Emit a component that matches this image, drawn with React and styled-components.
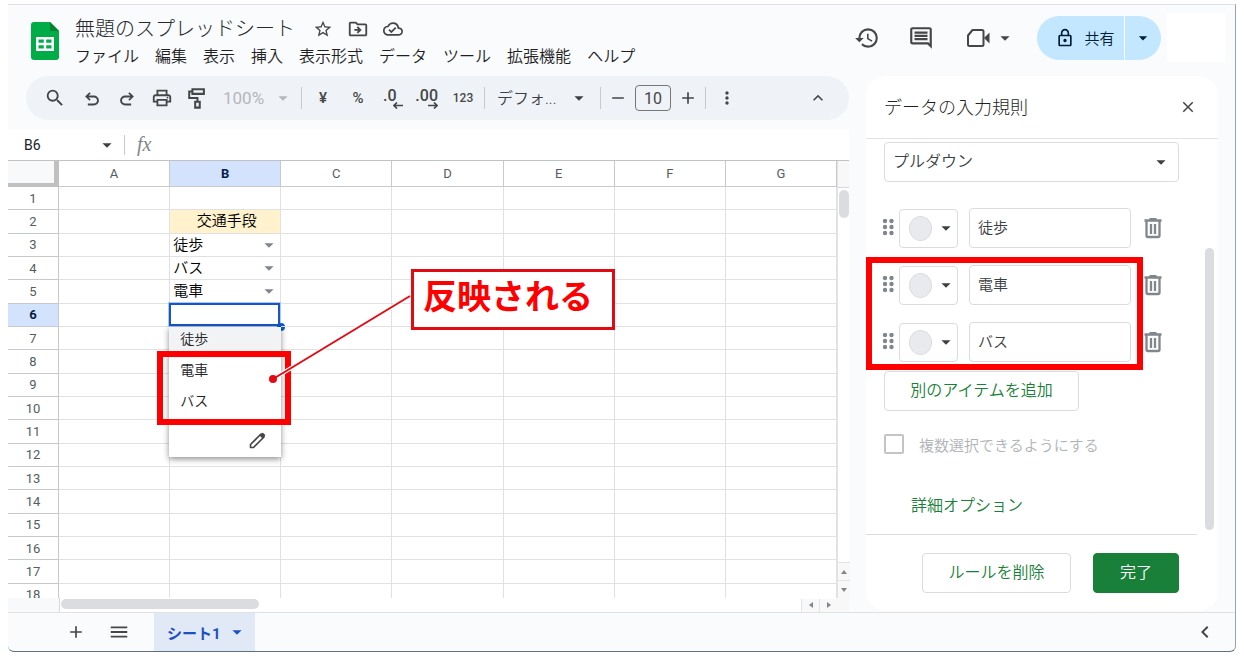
import { useState } from "react";
import styled, { createGlobalStyle } from "styled-components";
import {
  MdAdd,
  MdArrowDropDown,
  MdChevronLeft,
  MdClose,
  MdHistory,
  MdKeyboardArrowUp,
  MdMenu,
  MdMoreVert,
  MdOutlineCloudDone,
  MdOutlineComment,
  MdOutlineDriveFileMove,
  MdOutlineLock,
  MdOutlinePrint,
  MdRemove,
  MdSearch,
  MdStarBorder,
} from "react-icons/md";

const MENUS = ["ファイル", "編集", "表示", "挿入", "表示形式", "データ", "ツール", "拡張機能", "ヘルプ"];
const COLUMNS = ["A", "B", "C", "D", "E", "F", "G"];
const ROWS = Array.from({ length: 18 }, (_, i) => i + 1);
const CELLS = { 3: "徒歩", 4: "バス", 5: "電車" };
const OPTIONS = ["徒歩", "電車", "バス"];

const GlobalStyle = createGlobalStyle`
  * {
    box-sizing: border-box;
  }
  body {
    margin: 0;
    background: #fff;
    color: #3c4043;
    font-family: Roboto, "Noto Sans CJK JP", sans-serif;
  }
  button, input, select {
    margin: 0;
    padding: 0;
    border: 0;
    background: none;
    color: inherit;
    font: inherit;
  }
  svg {
    display: block;
    flex: none;
  }
`;

const Window = styled.div`
  display: flex;
  flex-direction: column;
  height: calc(100vh - 10px);
  min-height: 600px;
  margin: 4px 8px 6px;
  overflow: hidden;
  background: #f9fbfd;
  border-top: 1px solid #dfe1e4;
  border-right: 1px solid #98a3ae;
  border-bottom: 1px solid #5f7080;
  border-radius: 0 0 6px 6px;
`;

/* HEADER */
const Header = styled.header`
  display: flex;
  align-items: flex-start;
  height: 71px;
  flex: none;
  padding: 8px 10px 0 23px;
`;
const Logo = styled.svg`
  margin-top: 9px;
`;
const TitleBlock = styled.div`
  flex: 1;
  margin: 3px 0 0 16px;
`;
const TitleRow = styled.div`
  display: flex;
  align-items: center;
  height: 26px;
`;
const Title = styled.h1`
  margin: 0 10px 0 0;
  font-size: 20px;
  font-weight: 300;
  line-height: 26px;
  color: #26282b;
`;
const TitleButton = styled.button`
  display: grid;
  place-items: center;
  width: 35px;
  height: 26px;
  color: #444746;
`;
const MenuBar = styled.nav`
  display: flex;
  gap: 16px;
`;
const MenuButton = styled.button`
  height: 26px;
  font-size: 16px;
  font-weight: 350;
  white-space: nowrap;
  color: #1f1f1f;
`;
const Actions = styled.div`
  display: flex;
  align-items: center;
  height: 49px;
`;
const ActionButton = styled.button`
  display: flex;
  align-items: center;
  justify-content: center;
  gap: 4px;
  width: ${(props) => props.$width || 40}px;
  height: 40px;
  margin-right: ${(props) => (props.$width ? 10 : 14)}px;
  color: #444746;
`;
const Share = styled.div`
  display: flex;
  height: 44px;
  margin-right: 6px;
  overflow: hidden;
  border-radius: 22px;
  background: #c2e7ff;
  color: #001d35;
`;
const ShareButton = styled.button`
  display: flex;
  align-items: center;
  justify-content: center;
  gap: 9px;
  width: 87px;
  padding-left: 9px;
  font-size: 15px;
  font-weight: 350;
`;
const ShareMore = styled.button`
  display: grid;
  place-items: center;
  width: 37px;
  border-left: 1px solid #fff;
`;
const Account = styled.div`
  width: 58px;
  height: 49px;
  background: #fff;
`;

/* MAIN */
const Main = styled.main`
  display: grid;
  grid-template-columns: minmax(0, 1fr) 352px;
  gap: 17px;
  flex: 1;
  min-height: 0;
  padding-right: 17px;
`;
const Sheet = styled.section`
  display: flex;
  flex-direction: column;
  min-height: 0;
`;
const Toolbar = styled.div`
  display: flex;
  align-items: center;
  gap: 1px;
  height: 44px;
  flex: none;
  margin: 0 0 9px 18px;
  padding: 0 14px 0 10px;
  border-radius: 22px;
  background: #eff3f8;
  color: #444746;
`;
const ToolButton = styled.button`
  display: grid;
  place-items: center;
  flex: none;
  width: ${(props) => props.$width || 34}px;
  height: 32px;
  font-size: ${(props) => props.$size || 16}px;
  font-weight: 500;
`;
const Separator = styled.span`
  width: 1px;
  height: 22px;
  margin: 0 3px;
  flex: none;
  background: #c7cacf;
`;
const Spacer = styled.span`
  flex: 1;
`;
const Picker = styled.label`
  display: grid;
  grid-template-columns: minmax(0, 1fr);
  align-items: center;
  flex: none;
  width: ${(props) => props.$width};
  color: ${(props) => props.$color || "#3c4043"};
  > * {
    grid-area: 1 / 1;
  }
  > svg {
    justify-self: end;
    margin-right: ${(props) => props.$arrowGap || 3}px;
    pointer-events: none;
  }
`;
const PickerSelect = styled.select`
  width: 100%;
  height: ${(props) => (props.$boxed ? 40 : 32)}px;
  padding: ${(props) => (props.$boxed ? "0 8px 2px" : "0 8px")};
  appearance: none;
  opacity: 1;
  font-size: ${(props) => props.$size || 16}px;
  font-weight: ${(props) => (props.$size ? 400 : 350)};
  border: ${(props) => (props.$boxed ? "1px solid #dadce0" : "0")};
  border-radius: 4px;
`;
const Decimal = styled.span`
  display: flex;
  flex-direction: column;
  align-items: ${(props) => (props.$left ? "flex-start" : "flex-end")};
  width: 20px;
  font-size: 16px;
  line-height: 16px;
  svg {
    align-self: flex-end;
    margin-top: -2px;
  }
`;
const SizeInput = styled.input`
  width: 36px;
  height: 26px;
  margin: 0 3px;
  border: 1px solid #747775;
  border-radius: 4px;
  text-align: center;
  font-size: 16px;
`;
const FormulaBar = styled.div`
  display: flex;
  align-items: center;
  height: 31px;
  flex: none;
  background: #fff;
`;
const NameInput = styled.input`
  width: 87px;
  padding-left: 16px;
  font-size: 14px;
  color: #202124;
`;
const NameMore = styled.button`
  display: grid;
  place-items: center;
  width: 24px;
  margin-right: 5px;
`;
const FormulaLabel = styled.label`
  display: flex;
  flex: 1;
  align-items: center;
  gap: 12px;
  height: 20px;
  padding-left: 12px;
  border-left: 1px solid #c7cacf;
  color: #80868b;
  font: italic 20px "Liberation Serif", serif;
  input {
    flex: 1;
  }
`;

/* GRID */
const GridArea = styled.div`
  display: grid;
  grid-template-columns: minmax(0, 1fr) 12px;
  grid-template-rows: minmax(0, 1fr) 14px;
  flex: 1;
  min-height: 0;
  position: relative;
  border-top: 1px solid #c0c3c6;
  background: #fff;
`;
const GridView = styled.div`
  overflow: hidden;
`;
const Table = styled.table`
  width: 100%;
  height: 446px;
  table-layout: fixed;
  border-collapse: separate;
  border-spacing: 0;
`;
const Corner = styled.th`
  width: 51px;
  height: 26px;
  padding: 0;
  background: #f8f9fa;
  border-right: 5px solid #c0c0c0;
  border-bottom: 4px solid #c0c0c0;
`;
const ColumnHead = styled.th`
  height: 26px;
  padding: 0;
  border-right: 1px solid #c7c9cb;
  border-bottom: 1px solid #c7c9cb;
  background: ${(props) => (props.$active ? "#d3e3fd" : "#fff")};
  color: ${(props) => (props.$active ? "#041e49" : "#575b5f")};
  font-size: 13px;
  font-weight: ${(props) => (props.$active ? 700 : 400)};
`;
const RowHead = styled.th`
  height: 23px;
  padding: 0;
  border-right: 1px solid #c7c9cb;
  border-bottom: 1px solid #c7c9cb;
  background: ${(props) => (props.$active ? "#d3e3fd" : "#fff")};
  color: ${(props) => (props.$active ? "#041e49" : "#575b5f")};
  font-size: 13px;
  font-weight: ${(props) => (props.$active ? 700 : 400)};
  line-height: 15px;
`;
const Cell = styled.td`
  position: relative;
  height: 23px;
  padding: 0 0 0 3px;
  border-right: 1px solid #e1e1e1;
  border-bottom: 1px solid #e1e1e1;
  background: ${(props) => (props.$title ? "#fff2cc" : "transparent")};
  color: #000;
  font-size: 15px;
  font-weight: 350;
  line-height: 22px;
  text-align: ${(props) => (props.$title ? "center" : "left")};
`;
const Choice = styled.button`
  display: flex;
  align-items: center;
  justify-content: space-between;
  width: 100%;
  height: 22px;
  svg {
    color: #80868b;
  }
`;
const Selection = styled.div`
  position: absolute;
  inset: -1px 0 0 -1px;
  border: 2px solid #1a56c0;
  box-shadow: 0 0 0 1px #a8c7fa;
  &::after {
    content: "";
    position: absolute;
    right: -7px;
    bottom: -7px;
    width: 8px;
    height: 8px;
    border-radius: 50%;
    background: #0b57d0;
  }
`;
const Popup = styled.div`
  position: absolute;
  z-index: 1;
  top: 23px;
  left: -1px;
  right: -1px;
  background: #fff;
  box-shadow: 0 2px 6px rgba(0, 0, 0, 0.45);
`;
const PopupItem = styled.button`
  display: block;
  width: 100%;
  height: 31px;
  padding: 0 0 6px 11px;
  background: ${(props) => (props.$active ? "#f1f3f4" : "#fff")};
  color: #202124;
  font-size: 14px;
  font-weight: 350;
  text-align: left;
`;
const PopupEdit = styled.button`
  display: flex;
  align-items: center;
  justify-content: flex-end;
  width: 100%;
  height: 37px;
  padding: 4px 15px 0 0;
  color: #444746;
`;
const VerticalBar = styled.div`
  display: flex;
  flex-direction: column;
  align-items: center;
  border-left: 1px solid #e1e3e6;
  &::before {
    content: "";
    width: 100%;
    height: 26px;
    background: #f8f8f8;
    border-bottom: 1px solid #d5d7da;
  }
`;
const HorizontalBar = styled.div`
  display: flex;
  align-items: center;
  &::before {
    content: "";
    width: 51px;
    height: 100%;
    background: #f8f9fa;
    border-right: 1px solid #d5d7da;
  }
`;
const Thumb = styled.div`
  width: ${(props) => props.$width}px;
  height: ${(props) => props.$height}px;
  margin: ${(props) => props.$margin || 0};
  border-radius: 5px;
  background: #dadce0;
`;
const ScrollButton = styled.button`
  display: grid;
  place-items: center;
  width: ${(props) => (props.$wide ? 18 : 12)}px;
  height: ${(props) => (props.$wide ? 13 : 18)}px;
  background: #f8f8f8;
  border: solid #e1e3e6;
  border-width: ${(props) => (props.$wide ? "0 0 0 1px" : "1px 0 0")};
  color: #80868b;
`;
const BarCorner = styled.div`
  background: #f8f8f8;
`;

/* ANNOTATIONS */
const CellFrame = styled.div`
  position: absolute;
  z-index: 2;
  left: 149px;
  top: 190px;
  width: 134px;
  height: 74px;
  border: 6px solid #fe0000;
`;
const Pointer = styled.svg`
  position: absolute;
  z-index: 3;
  left: 259px;
  top: 130px;
`;
const Callout = styled.div`
  position: absolute;
  z-index: 3;
  left: 403px;
  top: 108px;
  width: 204px;
  height: 61px;
  padding-left: 9px;
  border: 3px solid #e30b13;
  background: #fff;
  color: #fe0000;
  font-size: 34px;
  font-weight: 700;
  line-height: 51px;
  white-space: nowrap;
`;
const RuleFrame = styled.div`
  position: absolute;
  top: -8px;
  bottom: -8px;
  left: -16px;
  width: 277px;
  border: 6px solid #fe0000;
  pointer-events: none;
`;

/* SIDE PANEL */
const Panel = styled.aside`
  display: flex;
  flex-direction: column;
  min-height: 0;
  margin-bottom: 1px;
  border-radius: 20px;
  background: #fff;
`;
const PanelHead = styled.div`
  display: flex;
  align-items: center;
  justify-content: space-between;
  height: 63px;
  flex: none;
  padding: 0 18px;
  border-bottom: 1px solid #e1e3e6;
`;
const PanelTitle = styled.h2`
  margin: 0;
  padding-bottom: 2px;
  color: #1f1f1f;
  font-size: 18px;
  font-weight: 300;
`;
const IconButton = styled.button`
  display: grid;
  place-items: center;
  width: 24px;
  height: 24px;
  color: #444746;
`;
const PanelBody = styled.div`
  display: flex;
  flex: 1;
  min-height: 0;
`;
const PanelContent = styled.div`
  flex: 1;
  padding: 3px 18px 0;
  border-bottom: 1px solid #dadce0;
`;
const PanelBar = styled.div`
  display: flex;
  flex-direction: column;
  justify-content: flex-end;
  width: 21px;
  padding: 0 4px 5px 8px;
`;
const Rules = styled.div`
  position: relative;
  display: flex;
  flex-direction: column;
  gap: 17px;
  margin: ${(props) => (props.$first ? 26 : 17)}px 0 0 -2px;
`;
const Rule = styled.div`
  display: flex;
  align-items: center;
  height: 40px;
`;
const Handle = styled.svg`
  margin-right: 5px;
  fill: #80868b;
`;
const ColorButton = styled.button`
  display: flex;
  align-items: center;
  gap: 3px;
  width: 59px;
  height: 39px;
  margin-right: 11px;
  padding-left: 9px;
  border: 1px solid #dadce0;
  border-radius: 4px;
`;
const Swatch = styled.span`
  width: 25px;
  height: 25px;
  border: 1px solid #dadce0;
  border-radius: 50%;
  background: #e8eaed;
`;
const RuleInput = styled.input`
  width: 162px;
  height: 40px;
  margin-right: 10px;
  padding: 0 8px 4px;
  border: 1px solid #dadce0;
  border-radius: 4px;
  font-size: 15px;
  font-weight: 350;
`;
const Button = styled.button`
  width: ${(props) => props.$width}px;
  height: 40px;
  padding-bottom: 4px;
  border: 1px solid ${(props) => (props.$primary ? "#188038" : "#dadce0")};
  border-radius: 4px;
  background: ${(props) => (props.$primary ? "#188038" : "#fff")};
  color: ${(props) => (props.$primary ? "#fff" : "#188038")};
  font-size: 16px;
  font-weight: 350;
`;
const AddButton = styled(Button)`
  display: block;
  margin-top: 9px;
`;
const Multi = styled.label`
  display: flex;
  align-items: center;
  gap: 15px;
  height: 20px;
  margin-top: 23px;
  color: #b0b3b7;
  font-size: 15px;
  font-weight: 350;
  white-space: nowrap;
  input {
    width: 20px;
    height: 20px;
    margin: 0;
    appearance: none;
    border: 2px solid #c2c4c7;
    border-radius: 2px;
  }
`;
const Advanced = styled.button`
  display: block;
  height: 22px;
  margin: 38px 0 0 27px;
  color: #188038;
  font-size: 16px;
  font-weight: 350;
`;
const PanelFoot = styled.div`
  display: flex;
  justify-content: flex-end;
  gap: 22px;
  flex: none;
  padding: 18px 39px 18px 0;
`;

/* SHEET TABS */
const Tabs = styled.footer`
  display: flex;
  align-items: stretch;
  height: 39px;
  flex: none;
  padding: 0 18px 0 46px;
  border-top: 1px solid #dfe2e5;
`;
const TabButton = styled.button`
  display: grid;
  place-items: center;
  width: ${(props) => props.$width || 43}px;
  color: #444746;
`;
const Tab = styled.button`
  display: flex;
  align-items: center;
  gap: 5px;
  width: 101px;
  margin-left: 14px;
  padding-left: 13px;
  background: #e1e9f7;
  color: #1a52c0;
  font-size: 15px;
  font-weight: 700;
`;

const UndoIcon = ({ flip }) => (
  <svg width="20" height="20" viewBox="0 0 24 24" fill="currentColor">
    <path
      transform={flip ? "matrix(-1 0 0 1 24 0)" : undefined}
      d="M7 21v-2.300h7.100q1.575 0 2.738-1T18 15t-1.162-2.700-2.738-1H7.800l2.600 2.600L9 15.300 3.700 10.100 9 5l1.500 1.500L7.900 9h6.300q2.500 0 4.300 1.700T20.300 15t-1.800 4.300T14.100 21z"
    />
  </svg>
);

const RollerIcon = () => (
  <svg width="22" height="22" viewBox="0 0 24 24" fill="none" stroke="currentColor" strokeWidth="2.200">
    <path d="M7 2.500h12.500v5H7zM7 5H3.500v7h9V16M10 16h5v6.500h-5z" />
  </svg>
);

const VideoIcon = () => (
  <svg width="24" height="20" viewBox="0 0 24 20" fill="none" stroke="currentColor" strokeWidth="2">
    <path d="M2 7.500 6.500 2H16q1.500 0 1.500 1.500v13q0 1.500-1.500 1.500H3.500Q2 18 2 16.500z" strokeLinejoin="round" />
    <path d="M18 10 23.500 4.500v11z" fill="currentColor" stroke="none" />
  </svg>
);

const TrashIcon = () => (
  <svg width="24" height="24" viewBox="0 0 24 24" fill="none" stroke="#80868b" strokeWidth="2.300">
    <path d="M3.500 4.500h17M8.500 3.200h7" />
    <path d="M5.500 5v14.500q0 1.500 1.500 1.500h10q1.500 0 1.500-1.500V5M10 8v10M14 8v10" />
  </svg>
);

const PencilIcon = () => (
  <svg width="17" height="17" viewBox="0 0 17 17" fill="none" stroke="currentColor" strokeWidth="1.600">
    <path d="M1.500 15.500v-3L12 2l3 3L4.500 15.500z" strokeLinejoin="round" />
    <path d="M10.500 3.500 13 1q.6-.5 1.200 0L16 2.800q.5.600 0 1.200l-2.500 2.500z" fill="currentColor" stroke="none" />
  </svg>
);

const ArrowIcon = ({ right }) => (
  <svg width="10" height="7" viewBox="0 0 10 7" fill="none" stroke="currentColor" strokeWidth="1.700">
    <path d={right ? "M0 3.500h9M6 .5l3 3-3 3" : "M10 3.500H1M4 .5l-3 3 3 3"} />
  </svg>
);

const Triangle = ({ turn }) => (
  <svg width="8" height="8" viewBox="0 0 8 8" fill="currentColor">
    <path d="M1 6h6L4 2z" transform={`rotate(${turn} 4 4)`} />
  </svg>
);

const RuleRow = ({ value }) => (
  <Rule>
    <Handle width="12" height="18" viewBox="0 0 12 18">
      {[2, 8, 14].map((y) => (
        <g key={y}>
          <circle cx="3" cy={y} r="2.200" />
          <circle cx="9.500" cy={y} r="2.200" />
        </g>
      ))}
    </Handle>
    <ColorButton aria-label="色">
      <Swatch />
      <MdArrowDropDown size={22} />
    </ColorButton>
    <RuleInput aria-label="アイテム" defaultValue={value} />
    <IconButton aria-label="アイテムを削除">
      <TrashIcon />
    </IconButton>
  </Rule>
);

const CellContent = ({ column, row }) => {
  if (column !== "B") return null;
  if (row === 2) return "交通手段";
  if (CELLS[row]) {
    return (
      <Choice>
        {CELLS[row]}
        <MdArrowDropDown size={22} />
      </Choice>
    );
  }
  if (row === 6) {
    return (
      <>
        <Selection />
        <Popup>
          {OPTIONS.map((option, i) => (
            <PopupItem key={option} $active={i === 0}>
              {option}
            </PopupItem>
          ))}
          <PopupEdit aria-label="編集">
            <PencilIcon />
          </PopupEdit>
        </Popup>
      </>
    );
  }
  return null;
};

const App = () => {
  const [fontSize, setFontSize] = useState(10);

  return (
    <Window>
      <GlobalStyle />
      <Header>
        <Logo width="28" height="38" viewBox="0 0 28 38">
          <path d="M3 0h16l9 9v26q0 3-3 3H3q-3 0-3-3V3q0-3 3-3z" fill="#00ac47" />
          <path d="M19 0l9 9h-9z" fill="#00832d" />
          <path d="M5 15h18v14H5zM7.500 17.500v3.300h5.300v-3.300zM15.200 17.500v3.300h5.300v-3.300zM7.500 23.200v3.300h5.300v-3.300zM15.200 23.200v3.300h5.300v-3.300z" fill="#fff" fillRule="evenodd" />
        </Logo>
        <TitleBlock>
          <TitleRow>
            <Title>無題のスプレッドシート</Title>
            <TitleButton aria-label="スター">
              <MdStarBorder size={20} />
            </TitleButton>
            <TitleButton aria-label="移動">
              <MdOutlineDriveFileMove size={22} />
            </TitleButton>
            <TitleButton aria-label="保存済み">
              <MdOutlineCloudDone size={20} />
            </TitleButton>
          </TitleRow>
          <MenuBar>
            {MENUS.map((menu) => (
              <MenuButton key={menu}>{menu}</MenuButton>
            ))}
          </MenuBar>
        </TitleBlock>
        <Actions>
          <ActionButton aria-label="変更履歴">
            <MdHistory size={26} />
          </ActionButton>
          <ActionButton aria-label="コメント">
            <MdOutlineComment size={26} />
          </ActionButton>
          <ActionButton aria-label="通話" $width={72}>
            <VideoIcon />
            <MdArrowDropDown size={22} />
          </ActionButton>
          <Share>
            <ShareButton>
              <MdOutlineLock size={20} />
              共有
            </ShareButton>
            <ShareMore aria-label="共有オプション">
              <MdArrowDropDown size={20} />
            </ShareMore>
          </Share>
          <Account />
        </Actions>
      </Header>

      <Main>
        <Sheet>
          <Toolbar>
            <ToolButton $width={38} aria-label="検索">
              <MdSearch size={22} />
            </ToolButton>
            <ToolButton aria-label="元に戻す">
              <UndoIcon />
            </ToolButton>
            <ToolButton aria-label="やり直し">
              <UndoIcon flip />
            </ToolButton>
            <ToolButton aria-label="印刷">
              <MdOutlinePrint size={22} />
            </ToolButton>
            <ToolButton aria-label="書式を貼り付け">
              <RollerIcon />
            </ToolButton>
            <Picker $width="82px" $color="#b4b7bb">
              <PickerSelect aria-label="ズーム" $size={17}>
                <option>100%</option>
              </PickerSelect>
              <MdArrowDropDown size={22} />
            </Picker>
            <Separator />
            <ToolButton $size={15}>¥</ToolButton>
            <ToolButton $size={15}>%</ToolButton>
            <ToolButton aria-label="小数点以下の桁数を減らす">
              <Decimal $left>
                .0
                <ArrowIcon />
              </Decimal>
            </ToolButton>
            <ToolButton aria-label="小数点以下の桁数を増やす">
              <Decimal>
                .00
                <ArrowIcon right />
              </Decimal>
            </ToolButton>
            <ToolButton $size={12}>123</ToolButton>
            <Separator />
            <Picker $width="107px" $arrowGap={6}>
              <PickerSelect aria-label="フォント">
                <option>デフォ...</option>
              </PickerSelect>
              <MdArrowDropDown size={22} />
            </Picker>
            <Separator />
            <ToolButton $width={26} aria-label="縮小" onClick={() => setFontSize(fontSize - 1)}>
              <MdRemove size={20} />
            </ToolButton>
            <SizeInput aria-label="フォントサイズ" value={fontSize} onChange={(e) => setFontSize(Number(e.target.value))} />
            <ToolButton $width={26} aria-label="拡大" onClick={() => setFontSize(fontSize + 1)}>
              <MdAdd size={20} />
            </ToolButton>
            <Separator />
            <ToolButton aria-label="その他">
              <MdMoreVert size={20} />
            </ToolButton>
            <Spacer />
            <ToolButton aria-label="メニューを隠す">
              <MdKeyboardArrowUp size={20} />
            </ToolButton>
          </Toolbar>

          <FormulaBar>
            <NameInput aria-label="名前ボックス" defaultValue="B6" />
            <NameMore aria-label="名前付き範囲">
              <MdArrowDropDown size={22} />
            </NameMore>
            <FormulaLabel>
              fx
              <input />
            </FormulaLabel>
          </FormulaBar>

          <GridArea>
            <GridView>
              <Table>
                <thead>
                  <tr>
                    <Corner />
                    {COLUMNS.map((column) => (
                      <ColumnHead key={column} $active={column === "B"}>
                        {column}
                      </ColumnHead>
                    ))}
                  </tr>
                </thead>
                <tbody>
                  {ROWS.map((row) => (
                    <tr key={row}>
                      <RowHead $active={row === 6}>{row}</RowHead>
                      {COLUMNS.map((column) => (
                        <Cell key={column} $title={column === "B" && row === 2}>
                          <CellContent column={column} row={row} />
                        </Cell>
                      ))}
                    </tr>
                  ))}
                </tbody>
              </Table>
            </GridView>
            <VerticalBar>
              <Thumb $width={10} $height={28} $margin="2px 0 0" />
              <Spacer />
              <ScrollButton aria-label="上へ">
                <Triangle turn={0} />
              </ScrollButton>
              <ScrollButton aria-label="下へ">
                <Triangle turn={180} />
              </ScrollButton>
            </VerticalBar>
            <HorizontalBar>
              <Thumb $width={198} $height={10} $margin="0 0 2px 1px" />
              <Spacer />
              <ScrollButton $wide aria-label="左へ">
                <Triangle turn={-90} />
              </ScrollButton>
              <ScrollButton $wide aria-label="右へ">
                <Triangle turn={90} />
              </ScrollButton>
            </HorizontalBar>
            <BarCorner />

            <CellFrame />
            <Pointer width="146" height="98" viewBox="0 0 146 98">
              <path d="M6 88 143 5" stroke="#fff" strokeWidth="4" />
              <path d="M6 88 143 5" stroke="#e30b13" strokeWidth="2" />
              <circle cx="6" cy="88" r="4" fill="#e30b13" />
            </Pointer>
            <Callout>反映される</Callout>
          </GridArea>
        </Sheet>

        <Panel>
          <PanelHead>
            <PanelTitle>データの入力規則</PanelTitle>
            <IconButton aria-label="閉じる">
              <MdClose size={18} />
            </IconButton>
          </PanelHead>
          <PanelBody>
            <PanelContent>
              <Picker $width="100%" $arrowGap={7}>
                <PickerSelect $boxed aria-label="条件">
                  <option>プルダウン</option>
                </PickerSelect>
                <MdArrowDropDown size={22} />
              </Picker>
              <Rules $first>
                <RuleRow value="徒歩" />
              </Rules>
              <Rules>
                <RuleRow value="電車" />
                <RuleRow value="バス" />
                <RuleFrame />
              </Rules>
              <AddButton $width={195}>別のアイテムを追加</AddButton>
              <Multi>
                <input type="checkbox" disabled />
                複数選択できるようにする
              </Multi>
              <Advanced>詳細オプション</Advanced>
            </PanelContent>
            <PanelBar>
              <Thumb $width={9} $height={282} />
            </PanelBar>
          </PanelBody>
          <PanelFoot>
            <Button $width={149}>ルールを削除</Button>
            <Button $width={86} $primary>
              完了
            </Button>
          </PanelFoot>
        </Panel>
      </Main>

      <Tabs>
        <TabButton aria-label="シートを追加">
          <MdAdd size={20} />
        </TabButton>
        <TabButton aria-label="すべてのシート">
          <MdMenu size={22} />
        </TabButton>
        <Tab>
          シート1
          <MdArrowDropDown size={22} />
        </Tab>
        <Spacer />
        <TabButton $width={24} aria-label="サイドパネルを表示">
          <MdChevronLeft size={24} />
        </TabButton>
      </Tabs>
    </Window>
  );
};

export default App;
